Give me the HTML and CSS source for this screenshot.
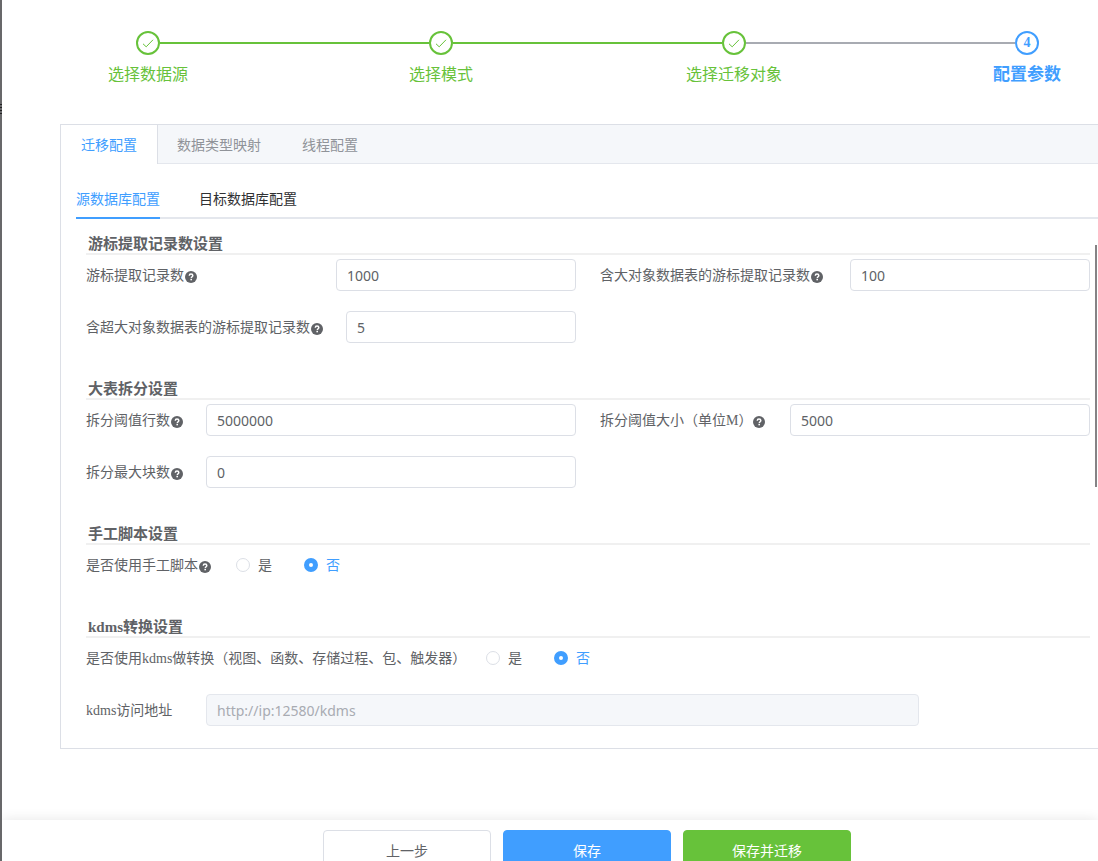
FILE: index.html
```html
<!DOCTYPE html>
<html lang="zh-CN">
<head>
<meta charset="utf-8">
<title>配置参数</title>
<link rel="stylesheet" href="styles.css">
</head>
<body>
<svg class="defs" aria-hidden="true">
  <symbol id="help" viewBox="0 0 12 12">
    <circle cx="6" cy="6" r="6" fill="#606266"/>
    <path d="M4.3 4.8C4.3 3.6 5 3.1 6 3.1s1.8.6 1.8 1.5c0 1.1-1.5 1.2-1.5 2.4" fill="none" stroke="#fff" stroke-width="1.5"/>
    <rect x="5.4" y="7.8" width="1.6" height="1.5" fill="#fff"/>
  </symbol>
  <symbol id="check" viewBox="0 0 12 12">
    <path d="M1 6.8 4.2 9.8 11 2.8" fill="none" stroke="currentColor" stroke-width="1"/>
  </symbol>
</svg>
<main class="page">
  <ol class="steps">
    <li class="step done"><span class="step-icon"><svg><use href="#check"/></svg></span><span class="step-line"></span><span class="step-title">选择数据源</span></li>
    <li class="step done"><span class="step-icon"><svg><use href="#check"/></svg></span><span class="step-line"></span><span class="step-title">选择模式</span></li>
    <li class="step done last-done"><span class="step-icon"><svg><use href="#check"/></svg></span><span class="step-line"></span><span class="step-title">选择迁移对象</span></li>
    <li class="step current"><span class="step-icon">4</span><span class="step-title">配置参数</span></li>
  </ol>

  <section class="panel">
    <nav class="tabs">
      <button class="tab active" type="button">迁移配置</button>
      <button class="tab" type="button">数据类型映射</button>
      <button class="tab" type="button">线程配置</button>
    </nav>
    <div class="panel-body">
      <nav class="subtabs">
        <button class="subtab active" type="button">源数据库配置</button>
        <button class="subtab" type="button">目标数据库配置</button>
      </nav>
      <form class="form" id="config">
        <section class="group">
          <h2>游标提取记录数设置</h2>
          <div class="fields">
            <div class="field"><label class="label w250" for="fetch">游标提取记录数<svg class="help"><use href="#help"/></svg></label><input class="text" id="fetch" type="text" value="1000"></div>
            <div class="field"><label class="label w250" for="lob">含大对象数据表的游标提取记录数<svg class="help"><use href="#help"/></svg></label><input class="text" id="lob" type="text" value="100"></div>
            <div class="field"><label class="label w260" for="biglob">含超大对象数据表的游标提取记录数<svg class="help"><use href="#help"/></svg></label><input class="text" id="biglob" type="text" value="5"></div>
          </div>
        </section>
        <section class="group">
          <h2>大表拆分设置</h2>
          <div class="fields">
            <div class="field"><label class="label w120" for="rows">拆分阈值行数<svg class="help"><use href="#help"/></svg></label><input class="text" id="rows" type="text" value="5000000"></div>
            <div class="field"><label class="label w190" for="size">拆分阈值大小（单位M）<svg class="help"><use href="#help"/></svg></label><input class="text" id="size" type="text" value="5000"></div>
            <div class="field"><label class="label w120" for="blocks">拆分最大块数<svg class="help"><use href="#help"/></svg></label><input class="text" id="blocks" type="text" value="0"></div>
          </div>
        </section>
        <section class="group">
          <h2>手工脚本设置</h2>
          <div class="fields">
            <div class="field wide" role="radiogroup" aria-labelledby="script-label">
              <span class="label w150" id="script-label">是否使用手工脚本<svg class="help"><use href="#help"/></svg></span>
              <label class="radio"><input type="radio" name="script"><span>是</span></label>
              <label class="radio"><input type="radio" name="script" checked><span>否</span></label>
            </div>
          </div>
        </section>
        <section class="group">
          <h2>kdms转换设置</h2>
          <div class="fields">
            <div class="field wide" role="radiogroup" aria-labelledby="kdms-label">
              <span class="label w400" id="kdms-label">是否使用kdms做转换（视图、函数、存储过程、包、触发器）</span>
              <label class="radio"><input type="radio" name="kdms"><span>是</span></label>
              <label class="radio"><input type="radio" name="kdms" checked><span>否</span></label>
            </div>
            <div class="field wide address"><label class="label w120" for="url">kdms访问地址</label><input class="text" id="url" type="text" placeholder="http://ip:12580/kdms" disabled></div>
          </div>
        </section>
      </form>
      <span class="scroll-thumb"></span>
    </div>
  </section>
</main>
<footer class="actions">
  <button class="btn" type="button">上一步</button>
  <button class="btn primary" type="button">保存</button>
  <button class="btn success" type="button">保存并迁移</button>
</footer>
</body>
</html>
```
FILE: styles.css
```css
* { box-sizing: border-box; }

body {
  margin: 0;
  height: 100vh;
  overflow: hidden;
  border-left: 2px solid #68686a;
  background: #fff;
  color: #606266;
  font: 14px/20px "Liberation Serif", "Noto Sans CJK SC", serif;
}

/* Sliver of the menu behind the left edge */
body::before {
  content: "";
  position: absolute;
  top: 104px;
  left: 0;
  width: 2px;
  height: 11px;
  background: repeating-linear-gradient(#222 0 1px, #68686a 1px 3px);
}

button, input { font: inherit; }
.defs { display: none; }

.page { padding: 31px 0 71px 58px; }

/* Steps */
.steps {
  display: flex;
  list-style: none;
  margin: 0 11px 37px 28px;
  padding: 0;
}
.step {
  flex: 1;
  display: grid;
  grid-template-columns: 48px 24px 48px 1fr;
  align-items: center;
  row-gap: 8px;
}
.step.current { flex: 0 0 120px; color: #409eff; font-weight: bold; }
.step.done { color: #67c23a; }
.step-icon {
  grid-column: 2;
  display: flex;
  align-items: center;
  justify-content: center;
  height: 24px;
  border: 2px solid;
  border-radius: 50%;
}
.step-icon svg { width: 12px; height: 12px; }
.step-line {
  grid-column: 3 / -1;
  height: 2px;
  margin-right: -48px;
  background: currentColor;
}
.last-done .step-line { background: #a8abb2; }
.step-title {
  grid-column: 1 / 4;
  text-align: center;
  font-size: 16px;
  line-height: 24px;
  white-space: nowrap;
}
.current .step-title { font-size: 17px; }

/* Panel and tabs */
.panel {
  border: 1px solid #dcdfe6;
  border-right: 0;
}
.tabs {
  display: flex;
  background: #f5f7fa;
  border-bottom: 1px solid #e4e7ed;
}
.tab {
  height: 39px;
  margin-bottom: -1px;
  padding: 2px 20px 0;
  border: 0;
  border-right: 1px solid transparent;
  background: none;
  color: #909399;
}
.tab.active + .tab { padding-left: 19px; }
.tab.active {
  background: #fff;
  border-right-color: #dcdfe6;
  color: #409eff;
}

.panel-body {
  position: relative;
  padding: 15px 0 22px 15px;
}
.subtabs {
  display: flex;
  gap: 39px;
  border-bottom: 2px solid #e4e7ed;
}
.subtab {
  height: 40px;
  margin-bottom: -2px;
  padding: 4px 0 0;
  border: 0;
  border-bottom: 2px solid transparent;
  background: none;
  color: #303133;
}
.subtab.active { color: #409eff; border-color: #409eff; }

/* Form */
.form {
  display: grid;
  gap: 35px;
  padding: 14px 8px 0 10px;
}
h2 {
  margin: 0 0 4px;
  padding: 2px 0 0 2px;
  border-bottom: 2px solid #f0f0f0;
  font-size: 15px;
  line-height: 18px;
}
.fields {
  display: grid;
  grid-template-columns: 1fr 1fr;
  gap: 20px 24px;
}
.field {
  display: flex;
  align-items: center;
  height: 32px;
}
.wide { grid-column: 1 / -1; }
.address { width: 83%; }
.label { flex: none; padding-top: 2px; white-space: nowrap; }
.w120 { width: 120px; }
.w150 { width: 150px; }
.w190 { width: 190px; }
.w250 { width: 250px; }
.w260 { width: 260px; }
.w400 { width: 400px; }
.help {
  width: 12px;
  height: 12px;
  margin-left: 1px;
  vertical-align: -3px;
}
.text {
  flex: 1;
  min-width: 0;
  height: 32px;
  padding: 0 10px;
  border: 1px solid #dcdfe6;
  border-radius: 4px;
  background: #fff;
  color: #606266;
  font-family: "Noto Sans", "Noto Sans CJK SC", sans-serif;
}
.text:disabled { background: #f5f7fa; border-color: #e4e7ed; }
.text::placeholder { color: #a8abb2; opacity: 1; }

.radio {
  display: flex;
  align-items: center;
  gap: 8px;
  margin-right: 32px;
}
.radio span { padding-top: 2px; }
.radio input {
  appearance: none;
  width: 14px;
  height: 14px;
  margin: 0;
  border: 1px solid #dcdfe6;
  border-radius: 50%;
  background: #fff;
}
.radio input:checked { border: 5px solid #409eff; }
.radio:has(:checked) { color: #409eff; }

.scroll-thumb {
  position: absolute;
  top: 81px;
  right: 1px;
  width: 2px;
  height: 242px;
  background: #858385;
}

/* Footer */
.actions {
  display: flex;
  justify-content: center;
  gap: 12px;
  padding: 10px 0 10px 74px;
  background: #fff;
  box-shadow: 0 0 12px rgba(0, 0, 0, 0.1);
}
.btn {
  width: 168px;
  height: 40px;
  border: 1px solid #dcdfe6;
  border-radius: 4px;
  background: #fff;
  color: #606266;
  font-family: "Noto Sans CJK SC", sans-serif;
}
.primary { background: #409eff; border-color: #409eff; color: #fff; }
.success { background: #67c23a; border-color: #67c23a; color: #fff; }
```
